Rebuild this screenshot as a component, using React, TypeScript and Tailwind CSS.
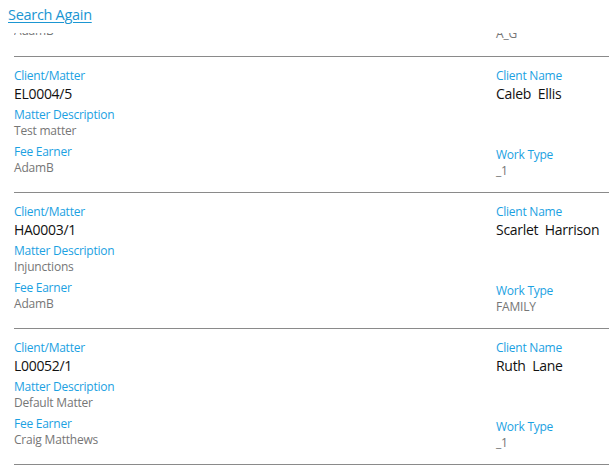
import React from "react";

type Matter = {
  clientMatter: string;
  description: string;
  feeEarner: string;
  clientName: string;
  workType: string;
};

const matters: Matter[] = [
  { clientMatter: "EL0004/5", description: "Test matter", feeEarner: "AdamB", clientName: "Caleb  Ellis", workType: "_1" },
  { clientMatter: "HA0003/1", description: "Injunctions", feeEarner: "AdamB", clientName: "Scarlet  Harrison", workType: "FAMILY" },
  { clientMatter: "L00052/1", description: "Default Matter", feeEarner: "Craig Matthews", clientName: "Ruth  Lane", workType: "_1" },
];

const font = { fontFamily: '"Open Sans", "Noto Sans", sans-serif' };

function Label({ children }: { children: React.ReactNode }) {
  return <div className="text-[12px] leading-[16px] tracking-[-0.25px] text-[#1ba1e2]">{children}</div>;
}

function Sub({ children }: { children: React.ReactNode }) {
  return <div className="text-[12px] leading-[16px] tracking-[-0.2px] text-[#767676]">{children}</div>;
}

function MatterRow({ m }: { m: Matter }) {
  return (
    <div className="flex h-[136px] border-b border-[#8a8a8a] pt-[11px]">
      {/* left column */}
      <div className="w-[482px] shrink-0">
        <Label>Client/Matter</Label>
        <div className="mt-[1px] text-[14px] leading-[18px] tracking-[-0.3px] text-[#111]">{m.clientMatter}</div>
        <div className="mt-[4px]">
          <Label>Matter Description</Label>
          <Sub>{m.description}</Sub>
        </div>
        <div className="mt-[5px]">
          <Label>Fee Earner</Label>
          <Sub>{m.feeEarner}</Sub>
        </div>
      </div>
      {/* right column */}
      <div className="flex-1">
        <Label>Client Name</Label>
        <div className="mt-[1px] whitespace-pre text-[14px] leading-[18px] tracking-[-0.3px] text-[#111]">
          {m.clientName}
        </div>
        <div className="mt-[44px]">
          <Label>Work Type</Label>
          <Sub>{m.workType}</Sub>
        </div>
      </div>
    </div>
  );
}

// bottom sliver of the row scrolled up under the header
function PartialRow() {
  return (
    <div className="flex h-[24px] overflow-hidden border-b border-[#8a8a8a]">
      <div className="mt-[-10px] w-[482px] shrink-0">
        <Sub>AdamB</Sub>
      </div>
      <div className="mt-[-7px] flex-1">
        <Sub>A_G</Sub>
      </div>
    </div>
  );
}

export default function App() {
  return (
    <div className="flex h-[466px] w-[609px] flex-col overflow-hidden bg-white" style={font}>
      <div className="h-[33px] shrink-0 pl-[8px] pt-[2px]">
        <a
          href="#"
          className="text-[14.5px] leading-[20px] tracking-[-0.3px] text-[#1b96d2] underline underline-offset-2"
        >
          Search Again
        </a>
      </div>
      <div className="flex-1 overflow-hidden">
        <div className="ml-[14px]">
          <PartialRow />
          {matters.map((m) => (
            <MatterRow key={m.clientMatter} m={m} />
          ))}
        </div>
      </div>
    </div>
  );
}
